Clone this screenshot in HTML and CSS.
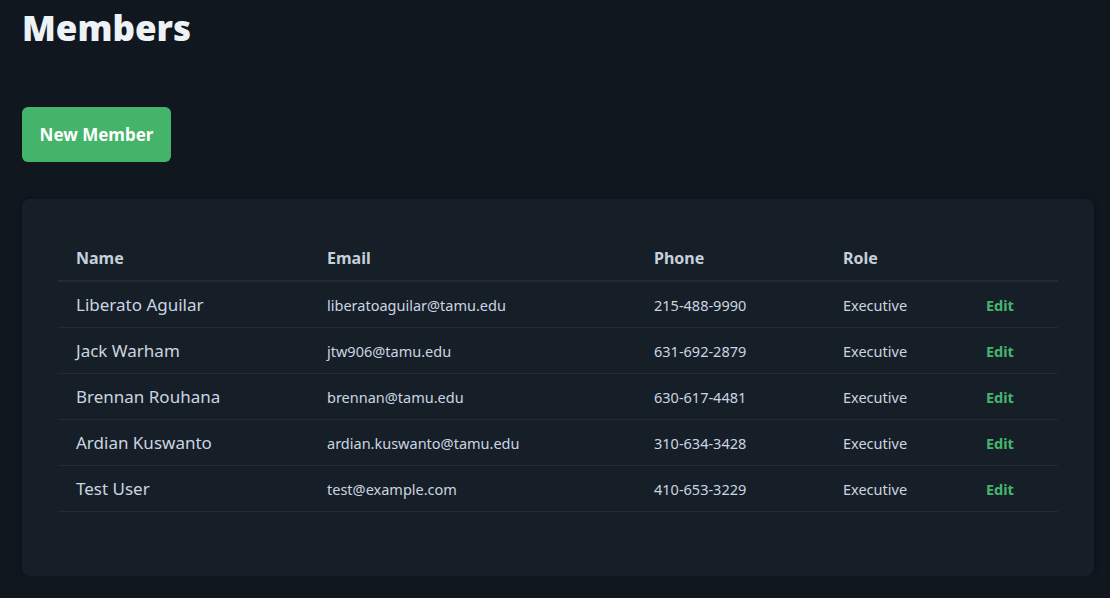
FILE: index.html
```html
<!DOCTYPE html>
<html>
<head>
<meta charset="utf-8">
<link rel="stylesheet" href="styles.css">
</head>
<body>
<main class="page">
  <h1 class="title">Members</h1>
  <button class="btn-new">New Member</button>
  <section class="card">
    <table class="members">
      <colgroup>
        <col class="c-name"><col class="c-email"><col class="c-phone"><col class="c-role"><col class="c-edit">
      </colgroup>
      <thead>
        <tr><th>Name</th><th>Email</th><th>Phone</th><th>Role</th><th></th></tr>
      </thead>
      <tbody>
        <tr><td class="name">Liberato Aguilar</td><td>liberatoaguilar@tamu.edu</td><td>215-488-9990</td><td>Executive</td><td><a class="edit">Edit</a></td></tr>
        <tr><td class="name">Jack Warham</td><td>jtw906@tamu.edu</td><td>631-692-2879</td><td>Executive</td><td><a class="edit">Edit</a></td></tr>
        <tr><td class="name">Brennan Rouhana</td><td>brennan@tamu.edu</td><td>630-617-4481</td><td>Executive</td><td><a class="edit">Edit</a></td></tr>
        <tr><td class="name">Ardian Kuswanto</td><td>ardian.kuswanto@tamu.edu</td><td>310-634-3428</td><td>Executive</td><td><a class="edit">Edit</a></td></tr>
        <tr><td class="name">Test User</td><td>test@example.com</td><td>410-653-3229</td><td>Executive</td><td><a class="edit">Edit</a></td></tr>
      </tbody>
    </table>
  </section>
</main>
</body>
</html>
```
FILE: styles.css
```css
html, body {
  margin: 0;
  background: #11171f;
}
body {
  font-family: "Noto Sans", "Open Sans", sans-serif;
  color: #cbd5e0;
}
.page {
  padding: 4px 16px 0 22px;
  display: flex;
  flex-direction: column;
  align-items: flex-start;
}
.title {
  margin: 0;
  font-size: 35px;
  font-weight: 900;
  color: #edf2f7;
  line-height: 48px;
}
.btn-new {
  margin-top: 55px;
  height: 55px;
  width: 149px;
  border: none;
  border-radius: 6px;
  background: #44b46a;
  color: #ffffff;
  font-family: inherit;
  font-size: 17px;
  font-weight: 700;
  padding: 0;
}
.card {
  margin-top: 37px;
  align-self: stretch;
  background: #161f28;
  border-radius: 8px;
  padding: 36px 36px 64px 36px;
  box-shadow: 0 0 6px rgba(0,0,0,0.3);
}
.members {
  width: 100%;
  border-collapse: collapse;
  table-layout: fixed;
}
.c-name { width: 251px; }
.c-email { width: 327px; }
.c-phone { width: 189px; }
.c-role { width: 143px; }
.c-edit { width: auto; }
.members th {
  text-align: left;
  padding: 0 18px;
  height: 45px;
  font-size: 16px;
  font-weight: 700;
  color: #c5d0db;
  border-bottom: 2px solid #222c37;
}
.members td {
  padding: 0 18px;
  height: 45px;
  font-size: 14.5px;
  color: #cbd5e0;
  border-bottom: 1px solid #222c37;
}
.members td.name {
  font-size: 17px;
}
.edit {
  color: #46b46c;
  font-weight: 700;
  cursor: pointer;
}
```
